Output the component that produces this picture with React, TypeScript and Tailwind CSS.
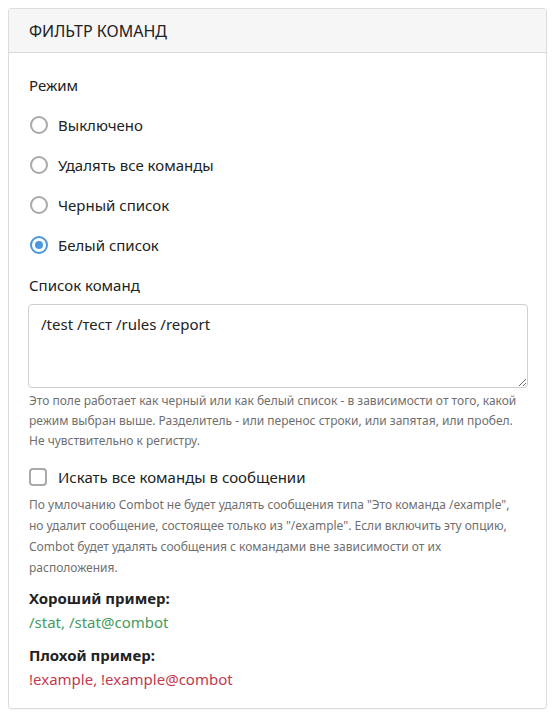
const Radio = ({ label, checked }: { label: string; checked?: boolean }) => (
  <label className="flex h-10 items-center gap-[10px]">
    <span
      className={
        "flex h-[18px] w-[18px] items-center justify-center rounded-full border-2 " +
        (checked ? "border-[#4a97de]" : "border-[#a9a9a9]")
      }
    >
      {checked && <span className="h-2 w-2 rounded-full bg-[#4a97de]" />}
    </span>
    <span>{label}</span>
  </label>
);

const App = () => {
  return (
    <div className="min-h-[717px] bg-white pt-[8px] pl-[8px] pr-[7px] font-['Noto_Sans',sans-serif] text-[15px] text-[#222]">
      <div className="rounded-[3px] border border-[#dcdcdc] shadow-[0_1px_1px_rgba(0,0,0,0.04)]">
        {/* Header */}
        <div className="flex h-[44px] items-center border-b border-[#d8d8d8] bg-[#f6f6f6] px-[20px] text-[16px] uppercase">
          Фильтр команд
        </div>

        <div className="px-[20px] pt-[20px] pb-[17px]">
          <div className="leading-6">Режим</div>
          <div className="mt-2 pl-[1px]">
            <Radio label="Выключено" />
            <Radio label="Удалять все команды" />
            <Radio label="Черный список" />
            <Radio label="Белый список" checked />
          </div>

          <div className="mt-2 leading-6">Список команд</div>
          <textarea
            className="-ml-px mt-[7px] block h-[84px] w-[500px] rounded-[4px] border border-[#cfcfcf] px-3 py-[7px] leading-6 outline-none"
            defaultValue="/test /тест /rules /report"
          />
          <p className="mt-[3px] text-[12px] leading-5 text-[#6f6f6f]">
            Это поле работает как черный или как белый список - в зависимости от того, какой режим
            выбран выше. Разделитель - или перенос строки, или запятая, или пробел. Не
            чувствительно к регистру.
          </p>

          <label className="mt-[14px] flex h-6 items-center gap-[11px]">
            <span className="h-[18px] w-[18px] rounded-[4px] border-2 border-[#a9a9a9]" />
            <span>Искать все команды в сообщении</span>
          </label>
          <p className="mt-[5px] text-[12px] leading-[21px] text-[#6f6f6f]">
            По умлочанию Combot не будет удалять сообщения типа "Это команда /example", но удалит
            сообщение, состоящее только из "/example". Если включить эту опцию, Combot будет
            удалять сообщения с командами вне зависимости от их расположения.
          </p>

          <div className="mt-2 font-bold leading-6">Хороший пример:</div>
          <div className="leading-6 text-[#469a60]">/stat, /stat@combot</div>
          <div className="mt-[9px] font-bold leading-6">Плохой пример:</div>
          <div className="leading-6 text-[#c23a4f]">!example, !example@combot</div>
        </div>
      </div>
    </div>
  );
};

export default App;
